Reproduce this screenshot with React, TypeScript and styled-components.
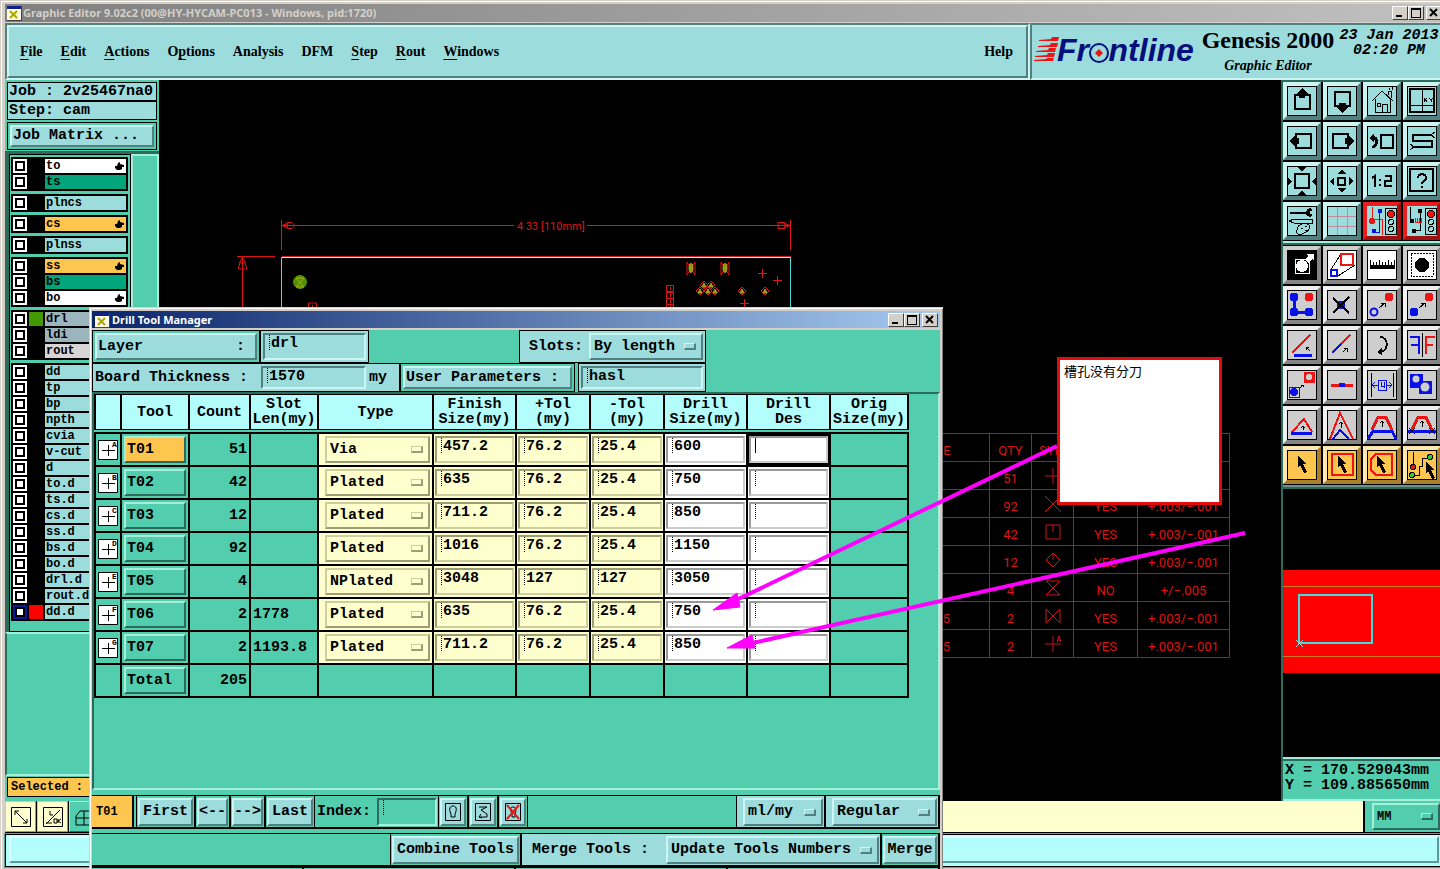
import React from 'react';
import styled, { createGlobalStyle, css } from 'styled-components';

const MONO = '"Liberation Mono", monospace';
const SERIF = '"Liberation Serif", serif';
const UI = '"Noto Sans", "Open Sans", sans-serif';

type Tone = 'aqua' | 'green' | 'cream' | 'white' | 'grey' | 'orange' | 'paper' | 'red' | 'ice' | 'win';

const tones: Record<Tone, { face: string; light: string; dark: string }> = {
  aqua: { face: '#9cdcdc', light: '#cdf5f2', dark: '#527f7f' },
  green: { face: '#52ceae', light: '#a4efdb', dark: '#2c6b5b' },
  cream: { face: '#ffffce', light: '#cecea0', dark: '#9c9c78' },
  white: { face: '#ffffff', light: '#cccccc', dark: '#999999' },
  grey: { face: '#cecece', light: '#f0f0f0', dark: '#848484' },
  orange: { face: '#ffc64f', light: '#ffe7b0', dark: '#a8802c' },
  paper: { face: '#ffffff', light: '#cecece', dark: '#848484' },
  red: { face: '#9cdcdc', light: '#ee1c1c', dark: '#a01010' },
  ice: { face: '#b4fdfd', light: '#dcffff', dark: '#5f9a9a' },
  win: { face: '#d4d0c8', light: '#ffffff', dark: '#404040' },
};

const raised = (tone: Tone, width = 2) => css`
  background: ${tones[tone].face};
  border: ${width}px solid;
  border-color: ${tones[tone].light} ${tones[tone].dark} ${tones[tone].dark} ${tones[tone].light};
`;

const sunken = (tone: Tone, width = 2) => css`
  background: ${tones[tone].face};
  border: ${width}px solid;
  border-color: ${tones[tone].dark} ${tones[tone].light} ${tones[tone].light} ${tones[tone].dark};
`;

const GlobalStyle = createGlobalStyle`
  *, *::before, *::after { box-sizing: border-box; }
  body { margin: 0; background: #000; overflow: hidden; }
  button, input, select {
    margin: 0; padding: 0; border: 0; border-radius: 0; outline: 0;
    background: none; color: #000; appearance: none;
    font: inherit; text-align: left;
  }
  svg { display: block; }
`;

/* ---------- application frame ---------- */

const Frame = styled.div`
  position: relative;
  display: flex;
  flex-direction: column;
  height: 100vh;
  overflow: hidden;
  padding: 4px 0 2px 5px;
  background: #d4d0c8;
  box-shadow: inset 1px 1px 0 #d4d0c8, inset 2px 2px 0 #fff;
  font: bold 15px/18px ${MONO};
  color: #000;
`;

const TitleBar = styled.div<{ $active?: boolean }>`
  display: flex;
  align-items: center;
  gap: ${p => (p.$active ? 2 : 1)}px;
  flex: none;
  height: ${p => (p.$active ? 18 : 19)}px;
  padding: 0 2px 0 ${p => (p.$active ? 2 : 1)}px;
  background: ${p => (p.$active ? 'linear-gradient(90deg, #0a246a, #a6caf0)' : 'linear-gradient(90deg, #808080, #c0c0c0)')};
  color: ${p => (p.$active ? '#fff' : '#d4d0c8')};
  font: bold 11px/18px ${UI};
  border-bottom: 1px solid #d4d0c8;
`;

const TitleText = styled.h1`
  flex: 1;
  margin: 0;
  font: inherit;
  white-space: nowrap;
`;

const CaptionButtons = styled.div<{ $shift?: boolean }>`
  display: flex;
  margin-right: ${p => (p.$shift ? -4 : 0)}px;
  button:last-child { margin-left: 2px; }
`;

const CaptionButton = styled.button`
  ${raised('win', 1)}
  width: 16px;
  height: 14px;
`;

const MenuRow = styled.div`
  display: flex;
  flex: none;
  height: 57px;
`;

const MenuFrame = styled.div`
  ${sunken('aqua')}
  flex: 1;
  display: flex;
`;

const MenuBar = styled.nav`
  ${raised('aqua')}
  flex: 1;
  display: flex;
  align-items: center;
  gap: 18px;
  padding: 0 13px 0 11px;
  font: bold 14px/18px ${SERIF};
`;

const MenuItem = styled.button<{ $last?: boolean }>`
  margin-left: ${p => (p.$last ? 'auto' : '0')};
  u { text-underline-offset: 3px; }
`;

const Brand = styled.header`
  ${sunken('aqua')}
  border-right: 0;
  display: flex;
  flex: none;
  width: 410px;
  padding: 1px 0 0 2px;
  gap: 2px;
`;

const BrandName = styled.div`
  display: flex;
  flex-direction: column;
  align-items: center;
  width: 136px;
  font: bold 24px/28px ${SERIF};
  white-space: nowrap;
  em { font-size: 14px; line-height: 24px; }
`;

const Clock = styled.time`
  flex: 1;
  text-align: center;
  font-style: italic;
  line-height: 15px;
  white-space: nowrap;
  padding-top: 2px;
`;

const Workspace = styled.main`
  flex: 1;
  display: flex;
  min-height: 0;
`;

/* ---------- layer list ---------- */

const Sidebar = styled.aside`
  flex: none;
  width: 154px;
  display: flex;
  flex-direction: column;
  padding: 2px;
  background: #52ceae;
`;

const InfoBox = styled.div`
  height: 19px;
  padding: 0 1px;
  border: 1px solid #000;
  background: #9cdcdc;
  white-space: nowrap;
  line-height: 17px;
`;

const MatrixBox = styled.div`
  margin-top: 2px;
  padding: 2px;
  border: 1px solid #000;
`;

const MatrixButton = styled.button`
  ${raised('aqua')}
  display: block;
  width: 100%;
  height: 22px;
  padding: 0 1px;
`;

const ListPane = styled.div`
  display: flex;
  margin: 1px -2px 0;
  border-top: 3px solid #2c6b5b;
  border-left: 4px solid #2c6b5b;
`;

const LayerGroups = styled.div`
  flex: none;
  width: 122px;
  height: 478px;
  display: flex;
  flex-direction: column;
  gap: 3px;
  padding: 2px 2px 0 1px;
  border: 1px solid #000;
`;

const ScrollTrack = styled.div`
  flex: 1;
  border: solid #a4efdb;
  border-width: 2px 2px 0 2px;
`;

const LayerGroup = styled.ul`
  list-style: none;
  margin: 0;
  padding: 2px;
  display: flex;
  flex-direction: column;
  gap: 2px;
  background: #000;
`;

const LayerRow = styled.li`
  display: grid;
  grid-template-columns: 14px 14px 1fr;
  gap: 2px;
  height: 14px;
`;

const LayerCheck = styled.input<{ $on?: boolean }>`
  width: 14px;
  height: 14px;
  border: 2px solid ${p => (p.$on ? '#0a1a9c' : '#fff')};
  background: #fff;
  box-shadow: inset 0 0 0 2px #000;
`;

const Swatch = styled.span<{ $color?: string }>`
  background: ${p => p.$color || '#000'};
`;

const LayerName = styled.label<{ $color: string }>`
  display: flex;
  align-items: center;
  justify-content: space-between;
  padding: 0 2px 0 1px;
  background: ${p => p.$color};
  font-size: 12px;
  line-height: 14px;
  white-space: nowrap;
`;

const SidePane = styled.div`
  flex: 1;
  margin: 0 -2px;
  border: solid;
  border-width: 2px 0 2px 2px;
  border-color: #a4efdb #52ceae #a4efdb #2c6b5b;
`;

const Selected = styled.div`
  height: 20px;
  margin: 1px 0 2px;
  padding: 0 3px;
  border: 1px solid #000;
  background: #ffc64f;
  font-size: 12px;
  line-height: 18px;
`;

/* ---------- drawing canvas ---------- */

const Canvas = styled.section`
  position: relative;
  flex: 1;
  min-width: 0;
  overflow: hidden;
  background: #000;
`;

const Board = styled.svg`
  position: absolute;
  inset: 0;
  width: 100%;
  height: 100%;
  font: 12px Roboto, sans-serif;
`;

const DrillChart = styled.table`
  position: absolute;
  left: 726px;
  top: 353px;
  border-collapse: collapse;
  table-layout: fixed;
  width: 344px;
  color: #dc1414;
  font: 13px/16px Roboto, sans-serif;
  th, td {
    height: 28px;
    padding: 7px 0 0;
    border: 1px solid #c41010;
    text-align: center;
    font-weight: 400;
    white-space: nowrap;
  }
  svg { margin: -7px auto 0; }
`;

/* ---------- right hand tool palette ---------- */

const Palette = styled.aside`
  flex: none;
  width: 159px;
  display: flex;
  flex-direction: column;
  overflow: hidden;
  background: #000;
  border-left: 2px solid #2c6b5b;
  border-top: 2px solid #2c6b5b;
`;

const ToolGrid = styled.div`
  display: grid;
  flex: none;
  width: 160px;
  grid-template-columns: repeat(4, 38px);
  gap: 2px;
  padding-bottom: 1px;
`;

const PaletteRule = styled.div<{ $dim?: boolean }>`
  flex: none;
  height: 4px;
  background: ${p => (p.$dim ? '#6f8f8a' : '#a4efdb')};
  border-bottom: 2px solid #2c6b5b;
  margin-bottom: ${p => (p.$dim ? 0 : 1)}px;
`;

const ToolButton = styled.button<{ $tone: Tone }>`
  ${p => raised(p.$tone, 4)}
  width: 38px;
  height: 38px;
  display: flex;
  align-items: center;
  justify-content: center;
`;

const Overview = styled.div`
  flex: 1;
  min-height: 0;
  background: #000;
  svg { width: 100%; height: 100%; }
`;

const Coordinates = styled.output`
  display: block;
  flex: none;
  height: 44px;
  padding: 4px 0 0 2px;
  background: #52ceae;
  border: solid;
  border-width: 2px 0 2px;
  border-color: #a4efdb;
  box-shadow: inset 0 2px 0 #2c6b5b;
  line-height: 15px;
  white-space: nowrap;
`;

/* ---------- bottom bars ---------- */

const BottomBar = styled.footer`
  display: flex;
  flex: none;
  height: 33px;
  border-bottom: 2px solid #000;
  background: #000;
`;

const SnapButton = styled.button<{ $on?: boolean }>`
  ${p => raised(p.$on ? 'green' : 'cream', 1)}
  width: 31px;
  height: 31px;
  margin-right: 1px;
  display: flex;
  align-items: center;
  justify-content: center;
`;

const MessageLine = styled.div`
  flex: 1;
  background: #ffffce;
`;

const UnitBox = styled.div`
  flex: none;
  width: 75px;
  margin-left: 2px;
  padding: 2px 0 2px 7px;
  background: #52ceae;
  font-size: 12px;
`;

const StatusBox = styled.div`
  flex: none;
  height: 33px;
  padding: 1px;
  background: #b4fdfd;
  border: 1px solid #000;
  border-right: 0;
  outline: 1px solid #5f9a9a;
  div {
    ${raised('ice')}
    height: 27px;
    margin: 0 0 0 2px;
  }
`;

/* ---------- drill tool manager ---------- */

const Dialog = styled.section`
  position: absolute;
  left: 89px;
  top: 307px;
  width: 854px;
  padding: 4px 3px 0;
  background: #d4d0c8;
  box-shadow: inset 1px 1px 0 #d4d0c8, inset 2px 2px 0 #fff, inset -1px 0 0 #808080;
`;

const DialogBody = styled.div`
  display: flex;
  flex-direction: column;
  margin-top: 1px;
  background: #52ceae;
`;

const Row = styled.div<{ $height: number }>`
  display: flex;
  height: ${p => p.$height}px;
`;

const Cell = styled.div<{ $width: number; $tone?: Tone; $gap?: number }>`
  flex: none;
  display: flex;
  align-items: center;
  width: ${p => p.$width}px;
  margin-left: ${p => p.$gap || 0}px;
  padding: 2px;
  border: 1px solid #000;
  background: ${p => tones[p.$tone || 'green'].face};
  white-space: nowrap;
`;

const CellLabel = styled.label<{ $indent?: number }>`
  flex: 1;
  padding-left: ${p => p.$indent || 0}px;
`;

const Unit = styled.span`
  width: 31px;
  padding-left: 3px;
`;

const PushButton = styled.button<{ $tone?: Tone; $face?: Tone; $center?: boolean }>`
  ${p => raised(p.$tone || 'aqua')}
  ${p => p.$face && css`background: ${tones[p.$face].face};`}
  flex: 1;
  display: flex;
  align-items: center;
  justify-content: ${p => (p.$center ? 'center' : 'space-between')};
  height: 100%;
  width: 100%;
  padding: 0 ${p => (p.$center ? 0 : 1)}px;
  white-space: nowrap;
`;

const FieldBox = styled.span<{ $tone: Tone; $width?: number; $focus?: boolean }>`
  ${p => sunken(p.$tone)}
  display: flex;
  flex: ${p => (p.$width ? 'none' : '1')};
  width: ${p => (p.$width ? `${p.$width}px` : 'auto')};
  min-width: 0;
  height: 100%;
  padding-left: 4px;
  &::before {
    content: '';
    flex: none;
    width: 2px;
    height: 15px;
    border-left: 1px ${p => (p.$focus ? 'solid' : 'dotted')} #000;
  }
  input {
    flex: 1;
    min-width: 0;
    height: 18px;
    line-height: 18px;
  }
`;

const OptionBox = styled.span<{ $tone: Tone; $width?: number }>`
  ${p => raised(p.$tone)}
  display: flex;
  align-items: center;
  flex: ${p => (p.$width ? 'none' : '1')};
  width: ${p => (p.$width ? `${p.$width}px` : 'auto')};
  height: 100%;
  select { flex: 1; min-width: 0; padding-left: 3px; }
  &::after {
    content: '';
    flex: none;
    width: 12px;
    height: 7px;
    margin-right: 5px;
    ${p => raised(p.$tone)}
    border-width: 1px 2px 2px 1px;
  }
`;

const TablePane = styled.div`
  height: 398px;
  border: solid;
  border-width: 2px;
  border-color: #2c6b5b #a4efdb #a4efdb #2c6b5b;
`;

const ToolTable = styled.table`
  width: 815px;
  table-layout: fixed;
  border-collapse: separate;
  border-spacing: 0;
  tbody::before { content: ''; display: table-row; height: 2px; }
`;

const Th = styled.th`
  height: 36px;
  padding: 0;
  border: solid #000;
  border-width: 1px 2px 1px 0;
  &:first-child { border-left-width: 2px; }
  background: #b4fdfd;
  line-height: 15px;
  white-space: nowrap;
`;

const Td = styled.td<{ $tone?: Tone; $right?: boolean; $top?: boolean; $focus?: boolean }>`
  height: ${p => (p.$top ? 35 : 33)}px;
  padding: ${p => (p.$tone ? '2px 1px' : '2px')};
  border: solid #000;
  border-width: ${p => (p.$top ? 2 : 0)}px 2px 2px 0;
  &:first-child { border-left-width: 2px; }
  background: ${p => (p.$focus ? '#000' : tones[p.$tone || 'green'].face)};
  text-align: ${p => (p.$right ? 'right' : 'left')};
  white-space: nowrap;
`;

const CellBox = styled.div<{ $inset?: boolean }>`
  display: flex;
  height: 27px;
  padding: ${p => (p.$inset ? '0 1px 0 5px' : '0')};
`;

const FooterBar = styled.div<{ $gap: number }>`
  display: flex;
  height: 34px;
  margin-top: ${p => p.$gap}px;
  border: solid #000;
  border-width: 1px 1px 2px 0;
`;

const FooterCell = styled.div<{ $width: number; $tone?: Tone; $plain?: boolean; $lead?: number }>`
  flex: none;
  display: flex;
  align-items: center;
  width: ${p => p.$width}px;
  padding: 2px 1px 1px ${p => p.$lead || 1}px;
  border: solid #000;
  border-width: ${p => (p.$plain ? '0' : '0 1px')};
  background: ${p => tones[p.$tone || 'green'].face};
  white-space: nowrap;
`;

const ToolTag = styled.div`
  width: 42px;
  margin-right: 2px;
  padding-left: 4px;
  border-right: 2px solid #000;
  background: #ffc64f;
  font-size: 12px;
  line-height: 32px;
`;

const Spacer = styled.div`
  flex: 1;
`;

const StubRow = styled.div`
  display: grid;
  grid-template-columns: repeat(4, 1fr);
  height: 30px;
  border-top: 1px solid #000;
  div { border-right: 2px solid #000; }
`;

/* ---------- annotations ---------- */

const Note = styled.div`
  position: absolute;
  left: 898px;
  top: 277px;
  width: 165px;
  height: 148px;
  padding: 1px 4px;
  border: 3px solid #e30c0c;
  background: #fff;
  font: 13px/20px "Noto Sans CJK SC", sans-serif;
`;

const Arrows = styled.svg`
  position: absolute;
  inset: 0;
  width: 100%;
  height: 100%;
  pointer-events: none;
`;

/* ---------- icons ---------- */

const R = '#ee1414';
const B = '#0a10e8';
const S = (p: React.SVGProps<SVGGElement>) => <g fill="none" stroke="#000" {...p} />;
const Cursor = ({ x = 0, y = 0 }) => (
  <path transform={`translate(${x} ${y})`} d="M10 7v11l2-2 4 8 3-1-4-8h4z" fill="#000" />
);
const Light = () => (
  <g stroke="#000">
    <rect x="18" y="2" width="11" height="26" fill="#9cdcdc" />
    <circle cx="24" cy="8" r="3.5" fill={R} />
    <circle cx="24" cy="16" r="2.5" fill="none" />
    <circle cx="24" cy="23" r="2.5" fill="none" />
  </g>
);

type Tool = { name: string; tone: Tone; art: React.ReactNode };

const topTools: Tool[] = [
  { name: 'Pan up', tone: 'aqua', art: <><S strokeWidth="2"><rect x="8" y="9" width="15" height="14" /></S><path d="M15 2l6 6h-3v4h-6V8H9z" /></> },
  { name: 'Pan down', tone: 'aqua', art: <><S strokeWidth="2"><rect x="8" y="6" width="15" height="14" /></S><path d="M15 27l6-6h-2v-4h-7v4H9z" /></> },
  { name: 'Home view', tone: 'aqua', art: <S><path d="M5 15L15 5l11 10M8 13v13h15V13M15 26v-8h5v8M10 17h3v3h-3zM21 9V5h3v7M22 2v2M25 1v3" /></S> },
  { name: 'Zoom to XY', tone: 'aqua', art: <S><rect x="3" y="3" width="24" height="23" strokeWidth="2" /><path d="M15 3v23M3 19h24M17 12l3 4M20 12l-3 4M22 12l2 2v2M26 12l-2 2" /></S> },
  { name: 'Pan left', tone: 'aqua', art: <><S strokeWidth="2"><rect x="9" y="8" width="15" height="14" /></S><path d="M2 15l6-5v2h4v6H8v2z" /></> },
  { name: 'Pan right', tone: 'aqua', art: <><S strokeWidth="2"><rect x="6" y="8" width="15" height="14" /></S><path d="M28 15l-6-5v2h-4v6h4v2z" /></> },
  { name: 'Previous view', tone: 'aqua', art: <><S strokeWidth="2"><rect x="14" y="9" width="12" height="13" /></S><path d="M2 12l5-4v2c5 0 6 9 0 12H5v-2c4-2 4-6 2-6v2z" /></> },
  { name: 'Snake view', tone: 'aqua', art: <><S strokeWidth="2"><path d="M24 9H6v6h19v6H7" /></S><S><path d="M24 9l4-3M24 9l4 3M7 21l-4-3M7 21l-4 3" /></S></> },
  { name: 'Zoom out', tone: 'aqua', art: <><S strokeWidth="2"><rect x="8" y="8" width="14" height="14" /></S><path d="M15 5l-5-4h10zM15 25l-5 4h10zM5 15l-5-4v9zM25 15l4-4v9z" /></> },
  { name: 'Zoom in', tone: 'aqua', art: <><S strokeWidth="2"><rect x="11" y="12" width="7" height="7" /></S><path d="M15 4l5 4H10zM15 26l5-4H10zM3 15l4-4v9zM26 15l-4-4v9z" /></> },
  { name: 'Zoom one to two', tone: 'aqua', art: <S strokeWidth="2"><path d="M5 12l3-2v11M13 13v2M13 18v2M18 10h6v5h-6v5h7" /></S> },
  { name: 'Query', tone: 'aqua', art: <S strokeWidth="2"><rect x="3" y="3" width="23" height="22" /><path d="M11 12c0-5 8-5 8 0 0 3-4 3-4 6M15 20v2" /></S> },
  { name: 'Options', tone: 'aqua', art: <><path d="M3 6h16c0-4 5-5 7-2l-3 1v3l3 1c-2 3-7 2-7-1H3z" /><S><path d="M2 15l5-2h18v4H7zM10 24c-2 4 3 6 7 3 6-2 8-8 3-9-5-2-10 2-10 6zM14 22h2M18 20h2M18 24h2" /></S></> },
  { name: 'Grid', tone: 'aqua', art: <S stroke="#c08c9c"><path d="M10 1v28M20 1v28M1 10h28M1 20h28" /></S> },
  { name: 'Net display', tone: 'red', art: <><S stroke={R}><path d="M5 1v12h10v16" /></S><S stroke={B}><path d="M12 4v22H7" /></S><circle cx="5" cy="15" r="3" fill={R} /><circle cx="13" cy="5" r="2.5" fill={B} /><circle cx="7" cy="25" r="2.5" fill={B} /><Light /></> },
  { name: 'Net highlight', tone: 'red', art: <><S><path d="M3 1v14l3 2M13 5v19H6" /></S><S stroke={R} strokeWidth="1"><path d="M8 16h7M8 12v4M10 12v4M12 12v4M14 12v4" /></S><circle cx="5" cy="15" r="2.5" /><circle cx="13" cy="5" r="2.5" /><circle cx="7" cy="25" r="2.5" /><Light /></> },
];

const editTools: Tool[] = [
  { name: 'Feature', tone: 'paper', art: <><rect x="1" y="1" width="28" height="28" /><rect x="8" y="9" width="14" height="14" fill="none" stroke="#fff" /><circle cx="15" cy="16" r="6" fill="#fff" /><path d="M18 10l3-4-2-2h8v7l-2-2-4 4z" fill="#fff" /></> },
  { name: 'Rescale', tone: 'paper', art: <><S><path d="M3 21L14 4M11 26l17-11" /></S><S stroke={R} strokeWidth="2"><rect x="14" y="4" width="12" height="11" /></S><S stroke={B} strokeWidth="2"><rect x="4" y="20" width="6" height="6" /></S></> },
  { name: 'Measure', tone: 'paper', art: <path d="M3 10h1v5h2v-3h1v3h2v-3h1v3h2v-5h1v5h2v-3h1v3h2v-3h1v3h2v-5h1v5h2v-3h1v3h2v-5h1v9H3z" /> },
  { name: 'Select area', tone: 'paper', art: <><circle cx="15" cy="15" r="7" /><S strokeDasharray="2 1"><rect x="4" y="3" width="22" height="23" /></S></> },
  { name: 'Chain', tone: 'grey', art: <><S stroke={B} strokeWidth="3"><path d="M7 7v15h15" /></S><circle cx="7" cy="7" r="4.5" fill={B} /><circle cx="7" cy="22" r="4.5" fill={B} /><circle cx="22" cy="22" r="4.5" fill={B} /><circle cx="22" cy="7" r="4.5" fill={R} /></> },
  { name: 'Delete', tone: 'grey', art: <><circle cx="14" cy="15" r="4.5" fill={B} /><S strokeWidth="2"><path d="M6 8l16 15M22 7L6 23" /></S></> },
  { name: 'Copy', tone: 'grey', art: <><circle cx="22" cy="7" r="4.5" fill={R} /><circle cx="7" cy="22" r="3.5" fill="none" stroke={B} strokeWidth="2" shapeRendering="auto" /><S><path d="M12 18l6-5M14 13h4v4" /></S></> },
  { name: 'Move', tone: 'grey', art: <><circle cx="22" cy="7" r="4.5" fill={R} /><circle cx="7" cy="22" r="4.5" fill={B} /><S><path d="M12 18l6-5M14 13h4v4" /></S></> },
  { name: 'Angle', tone: 'grey', art: <><S stroke={R} strokeWidth="2"><path d="M5 23L23 5" /></S><S stroke={B} strokeWidth="3"><path d="M7 25h18" /></S><S><path d="M23 21l-4-4M19 20v-3h3" /></S></> },
  { name: 'Extend', tone: 'grey', art: <><S stroke={B} strokeWidth="2"><path d="M5 23l9-9" /></S><S stroke={R} strokeWidth="2"><path d="M14 14l9-9" /></S><S><path d="M16 22l4-4M17 18h3v4" /></S></> },
  { name: 'Rotate', tone: 'grey', art: <><S><path d="M13 7c9 0 9 14 0 15" strokeWidth="2" /></S><path d="M10 22l5-4v7z" /></> },
  { name: 'Mirror', tone: 'grey', art: <><S><path d="M15 3v24" /></S><S stroke={B} strokeWidth="2"><path d="M3 7h9v17M4 15h8" /></S><S stroke={R} strokeWidth="2"><path d="M28 7h-9v17M26 15h-7" /></S></> },
  { name: 'Copy pad', tone: 'grey', art: <><rect x="17" y="2" width="11" height="11" fill={R} /><circle cx="22" cy="7" r="3" fill="#cecece" /><S stroke={B}><rect x="2" y="17" width="10" height="10" /></S><circle cx="7" cy="22" r="4" fill={B} /><S><path d="M13 18l3-3M14 15h2v2" /></S></> },
  { name: 'Break', tone: 'grey', art: <><path d="M4 15h22" stroke={R} strokeWidth="3" /><path d="M12 15h6" stroke={B} strokeWidth="4" /></> },
  { name: 'Spacing', tone: 'grey', art: <><S><path d="M4 3v24M26 3v24" /></S><S stroke={B}><path d="M5 15h6M8 12l-3 3 3 3M25 15h-6M22 12l3 3-3 3M11 10h8v10h-8zM14 12v4h3M17 12v6" /></S></> },
  { name: 'Merge', tone: 'grey', art: <><path d="M3 4h13v7h9v13H12v-6H3z" fill={B} /><circle cx="9" cy="9" r="3.5" fill="#cecece" shapeRendering="auto" /><circle cx="18" cy="17" r="4.5" fill="#cecece" shapeRendering="auto" /></> },
  { name: 'Slide segment', tone: 'grey', art: <><S stroke={R} strokeWidth="2"><path d="M5 22L17 9l8 13" /></S><path d="M4 23h21" stroke={B} strokeWidth="3" /><S><path d="M16 20v-4M14 18l2-2 2 2" /></S></> },
  { name: 'Slide corner', tone: 'grey', art: <><S stroke={R} strokeWidth="2"><path d="M3 29L13 3l13 26" /></S><S stroke={B} strokeWidth="2"><path d="M6 29l7-9 9 9" /></S><S><path d="M14 18v-6M12 14l2-2 2 2" /></S></> },
  { name: 'Slide shape', tone: 'grey', art: <><S stroke={R} strokeWidth="3"><path d="M5 20l6-13h8l6 13" /></S><S stroke={B} strokeWidth="3"><path d="M1 29l5-8h19l4 8" /></S><S><path d="M15 17v-6M13 13l2-2 2 2" /></S></> },
  { name: 'Slide free', tone: 'grey', art: <><S stroke={R} strokeWidth="3"><path d="M5 20l6-13h8l6 13" /></S><path d="M1 21h28" stroke={B} strokeWidth="3" /><S><path d="M15 17v-6M13 13l2-2 2 2M2 18l6 6M8 18l-6 6M22 18l6 6M28 18l-6 6" /></S></> },
  { name: 'Select', tone: 'orange', art: <Cursor x={1} y={-1} /> },
  { name: 'Select in box', tone: 'orange', art: <><S stroke={R} strokeWidth="2"><rect x="5" y="4" width="21" height="21" /></S><Cursor x={1} y={-1} /></> },
  { name: 'Select in polygon', tone: 'orange', art: <><S stroke={R} strokeWidth="2"><path d="M9 4h16v21H9l-5-5V9z" /></S><Cursor x={0} y={-1} /></> },
  { name: 'Select net', tone: 'orange', art: <><S><path d="M6 2v15M6 25h6v-9h3V8h7" /></S><circle cx="6" cy="17" r="2.5" fill={R} stroke="#000" /><circle cx="5" cy="25" r="2.5" fill="#3c3" stroke="#000" /><circle cx="23" cy="7" r="2.5" fill="#3c3" stroke="#000" /><Cursor x={9} y={5} /></> },
];

const ToolIcon = ({ tool }: { tool: Tool }) => (
  <ToolButton $tone={tool.tone} aria-label={tool.name}>
    <svg width="30" height="30" viewBox="0 0 30 30" shapeRendering="crispEdges">
      {tool.tone === 'red' ? null : <rect x="0.5" y="0.5" width="29" height="29" fill="none" stroke="#000" />}
      {tool.art}
    </svg>
  </ToolButton>
);

const WindowIcon = () => (
  <svg width="16" height="16" viewBox="0 0 16 16" shapeRendering="crispEdges" aria-hidden="true">
    <rect x="1" y="1" width="14" height="14" fill="#fffbe6" />
    <rect x="1" y="1" width="14" height="3" fill="#10208a" />
    <path d="M4 6l7 7M11 6l-7 7" stroke="#a8a800" strokeWidth="2" shapeRendering="auto" />
    <path d="M15 1v14H1" fill="none" stroke="#444" />
  </svg>
);

const WindowControls = ({ shift }: { shift?: boolean }) => (
  <CaptionButtons $shift={shift}>
    <CaptionButton aria-label="Minimize"><svg width="14" height="12"><path d="M3 9h6" stroke="#000" strokeWidth="2" /></svg></CaptionButton>
    <CaptionButton aria-label="Maximize"><svg width="14" height="12" shapeRendering="crispEdges"><path d="M2.5 2h9v8h-9z" fill="none" stroke="#000" /><path d="M2 2h10" stroke="#000" strokeWidth="2" /></svg></CaptionButton>
    <CaptionButton aria-label="Close"><svg width="14" height="12"><path d="M3 2l7 7M10 2l-7 7" stroke="#000" strokeWidth="2" /></svg></CaptionButton>
  </CaptionButtons>
);

const Logo = () => (
  <svg width="164" height="48" viewBox="0 0 164 48" role="img" aria-label="Frontline">
    <g fill={R}>
      <path d="M5 14l12-1 1-2h7l-1 4H5z" />
      <path d="M4 20l12-1 1-2h7l-1 4H4z" />
      <path d="M2 25l12-1 1-2h7l-1 4H2z" />
      <path d="M1 30l12-1 1-2h7l-1 4H1z" />
      <path d="M0 34l12-1 1-1h7l-1 3H0z" />
    </g>
    <text x="23" y="35" fontFamily="Liberation Sans, sans-serif" fontSize="32" fontWeight="700" fontStyle="italic" fill="#06107c">
      Fr<tspan fill="none">o</tspan>ntline
    </text>
    <circle cx="65" cy="27" r="9" fill="none" stroke="#06107c" strokeWidth="2" />
    <path d="M65 23l4 4-4 4-4-4z" fill={R} />
  </svg>
);

const Hand = () => (
  <svg width="9" height="9" viewBox="0 0 9 9" aria-hidden="true">
    <path d="M3 1l2-1v2l4 1v2H7v2L5 8H2L0 6V4h2z" />
  </svg>
);

/* ---------- data ---------- */

type Layer = { name: string; color: string; hand?: boolean; swatch?: string; on?: boolean };
const aqua = '#9cdcdc';
const layerGroups: Layer[][] = [
  [{ name: 'to', color: '#fff', hand: true }, { name: 'ts', color: '#00a57b' }],
  [{ name: 'plncs', color: aqua }],
  [{ name: 'cs', color: '#ffc64f', hand: true }],
  [{ name: 'plnss', color: aqua }],
  [{ name: 'ss', color: '#ffc64f', hand: true }, { name: 'bs', color: '#00a57b' }, { name: 'bo', color: '#fff', hand: true }],
  [{ name: 'drl', color: '#9cb5bd', swatch: '#429a00' }, { name: 'ldi', color: '#9cb5bd' }, { name: 'rout', color: '#d6d6d6' }],
  [
    ...['dd', 'tp', 'bp', 'npth', 'cvia', 'v-cut', 'd', 'to.d', 'ts.d', 'cs.d', 'ss.d', 'bs.d', 'bo.d', 'drl.d', 'rout.d'].map(name => ({ name, color: aqua })),
    { name: 'dd.d', color: aqua, swatch: '#ff0000', on: true },
  ],
];

const menus: [string, string, string][] = [
  ['', 'F', 'ile'], ['', 'E', 'dit'], ['', 'A', 'ctions'], ['O', 'p', 'tions'], ['Analysis', '', ''],
  ['DFM', '', ''], ['', 'S', 'tep'], ['', 'R', 'out'], ['', 'W', 'indows'],
];

const columns: [string, number][] = [
  ['', 28], ['Tool', 68], ['Count', 61], ['Slot|Len(my)', 68], ['Type', 115], ['Finish|Size(my)', 83],
  ['+Tol|(my)', 74], ['-Tol|(my)', 74], ['Drill|Size(my)', 83], ['Drill|Des', 83], ['Orig|Size(my)', 78],
];

const tools = [
  { mark: 'A', id: 'T01', count: 51, slot: '', type: 'Via', finish: '457.2', plus: '76.2', minus: '25.4', drill: '600' },
  { mark: 'B', id: 'T02', count: 42, slot: '', type: 'Plated', finish: '635', plus: '76.2', minus: '25.4', drill: '750' },
  { mark: 'C', id: 'T03', count: 12, slot: '', type: 'Plated', finish: '711.2', plus: '76.2', minus: '25.4', drill: '850' },
  { mark: 'D', id: 'T04', count: 92, slot: '', type: 'Plated', finish: '1016', plus: '76.2', minus: '25.4', drill: '1150' },
  { mark: 'E', id: 'T05', count: 4, slot: '', type: 'NPlated', finish: '3048', plus: '127', minus: '127', drill: '3050' },
  { mark: 'F', id: 'T06', count: 2, slot: '1778', type: 'Plated', finish: '635', plus: '76.2', minus: '25.4', drill: '750' },
  { mark: 'G', id: 'T07', count: 2, slot: '1193.8', type: 'Plated', finish: '711.2', plus: '76.2', minus: '25.4', drill: '850' },
];

const chart: { size: string; qty: string; sym: string; plated: string; tol: string }[] = [
  { size: '', qty: '51', sym: 'M0 8h16M8 0v16', plated: 'YES', tol: '+.003/−.001' },
  { size: '', qty: '92', sym: 'M0 0l16 16M16 0L0 16', plated: 'YES', tol: '+.003/−.001' },
  { size: '', qty: '42', sym: 'M1 1h14v14H1zM8 1v7', plated: 'YES', tol: '+.003/−.001' },
  { size: '', qty: '12', sym: 'M8 1l7 7-7 7-7-7zM8 1v7', plated: 'YES', tol: '+.003/−.001' },
  { size: '', qty: '4', sym: 'M1 1h14L1 15h14z', plated: 'NO', tol: '+/−.005' },
  { size: '.025', qty: '2', sym: 'M1 1v14L15 1v14z', plated: 'YES', tol: '+.003/−.001' },
  { size: '.025', qty: '2', sym: 'M0 8h16M8 0v16M12 6l2-6 2 6M13 4h2', plated: 'YES', tol: '+.003/−.001' },
];

/* ---------- parts ---------- */

const Field = ({ id, label, value, tone, width, focus }: { id?: string; label: string; value: string; tone: Tone; width?: number; focus?: boolean }) => (
  <FieldBox $tone={tone} $width={width} $focus={focus}>
    <input id={id} aria-label={label} defaultValue={value} />
  </FieldBox>
);

const OptionMenu = ({ id, label, value, tone, width }: { id?: string; label: string; value: string; tone: Tone; width?: number }) => (
  <OptionBox $tone={tone} $width={width}>
    <select id={id} aria-label={label} defaultValue={value}>
      <option>{value}</option>
    </select>
  </OptionBox>
);

const Diamond = ({ x, y }: { x: number; y: number }) => (
  <g>
    <path d={`M${x} ${y - 4}l4 4-4 4-4-4z`} fill="none" stroke="#e01414" />
    <path d={`M${x} ${y - 2}l2 4h-4z`} fill="#a8a010" stroke="#a8a010" />
  </g>
);

const BoardDrawing = () => (
  <Board aria-label="Board drawing">
    <g transform="translate(-159 -80)" fill="none" stroke="#e01414">
      <path d="M281.5 220v30M790.5 220v30M282 225.5h232M587 225.5h203M242.5 257v60M237 256.5h38" />
      <path d="M282 225.5l5-2v4zM287 222.5h5l2 2v2l-2 2h-5zM790 225.5l-5-2v4zM785 222.500h-7v6h7zM242.500 257l-3 6h6zM240 263l-2 6h9l-2-6" />
      <path d="M282 256.500h509" />
      <path d="M282 257.500h509" stroke="#fff" />
      <path d="M281.500 257v60M790.500 257v60" stroke="#4fd6d6" />
      <circle cx="300" cy="282" r="6.500" fill="#4f9400" stroke="#4f9400" />
      <path d="M296 278h8l-8 9h8z" stroke="#b0a818" />
      <path d="M308.500 310v-7h8v7M312.500 305v4" />
      {[691, 725].map(x => (
        <g key={x}>
          <path d={`M${x - 4} 262v13M${x + 4} 262v13M${x - 4} 262l8 13M${x + 4} 262l-8 13`} />
          <ellipse cx={x} cy="268" rx="2" ry="4.500" fill="#8a9a10" stroke="#c0a818" />
        </g>
      ))}
      {[285, 292, 298, 304].map(y => <path key={y} d={`M666.500 ${y}.500h7v6h-7zM670.500 ${y + 2}v3`} />)}
      {[[704, 285], [711, 285], [700, 291], [708, 291], [715, 291], [742, 291], [765, 291]].map(([x, y]) => <Diamond key={`${x}-${y}`} x={x} y={y} />)}
      <path d="M758 273.500h9M762.500 269v9M773 280.500h9M777.500 276v9M740 303.500h9M744.500 299v9" />
      <text x="517" y="230" fill="#e01414" stroke="none" fontSize="11">4 33 [110mm]</text>
    </g>
  </Board>
);

const ChartTable = () => (
  <DrillChart>
    <colgroup>
      <col width="104" /><col width="42" /><col width="42" /><col width="64" /><col width="92" />
    </colgroup>
    <thead><tr><th>SIZE</th><th>QTY</th><th>SYM</th><th>PLTD</th><th>TOL</th></tr></thead>
    <tbody>
      {chart.map((r, i) => (
        <tr key={i}>
          <td>{r.size}</td><td>{r.qty}</td>
          <td><svg width="16" height="16"><path d={r.sym} fill="none" stroke="#d01212" /></svg></td>
          <td>{r.plated}</td><td>{r.tol}</td>
        </tr>
      ))}
    </tbody>
  </DrillChart>
);

const LayerList = () => (
  <Sidebar>
    <InfoBox>Job : 2v25467na0</InfoBox>
    <InfoBox>Step: cam</InfoBox>
    <MatrixBox><MatrixButton>Job Matrix ...</MatrixButton></MatrixBox>
    <ListPane>
      <LayerGroups>
        {layerGroups.map((group, i) => (
          <LayerGroup key={i}>
            {group.map(layer => (
              <LayerRow key={layer.name}>
                <LayerCheck type="checkbox" id={`layer-${layer.name}`} $on={layer.on} />
                <Swatch $color={layer.swatch} />
                <LayerName htmlFor={`layer-${layer.name}`} $color={layer.color}>{layer.name}{layer.hand && <Hand />}</LayerName>
              </LayerRow>
            ))}
          </LayerGroup>
        ))}
      </LayerGroups>
      <ScrollTrack />
    </ListPane>
    <SidePane />
    <Selected>Selected :</Selected>
  </Sidebar>
);

const DrillToolManager = () => (
  <Dialog aria-label="Drill Tool Manager">
    <TitleBar $active><WindowIcon /><TitleText as="h2">Drill Tool Manager</TitleText><WindowControls /></TitleBar>
    <DialogBody>
      <Row $height={33}>
        <Cell $width={168}><PushButton><span>Layer</span><span>:&nbsp;</span></PushButton></Cell>
        <Cell $width={109} $tone="aqua"><Field label="Layer" value="drl" tone="aqua" /></Cell>
        <Cell $width={187} $gap={150} $tone="aqua">
          <CellLabel htmlFor="slots" $indent={7}>Slots:</CellLabel>
          <OptionMenu id="slots" label="Slots" value="By length" tone="aqua" width={114} />
        </Cell>
      </Row>
      <Row $height={29}>
        <Cell $width={308} $tone="aqua">
          <CellLabel htmlFor="thickness">Board Thickness :</CellLabel>
          <Field id="thickness" label="Board Thickness" value="1570" tone="aqua" width={105} />
          <Unit>my</Unit>
        </Cell>
        <Cell $width={175}><PushButton>User Parameters :</PushButton></Cell>
        <Cell $width={128} $gap={3} $tone="aqua"><Field label="User Parameters" value="hasl" tone="aqua" /></Cell>
      </Row>
      <TablePane>
        <ToolTable>
          <colgroup>{columns.map(([name, width]) => <col key={name} width={width} />)}</colgroup>
          <thead>
            <tr>
              {columns.map(([name]) => (
                <Th key={name}>{name.split('|').map((line, i) => <React.Fragment key={line}>{i > 0 && <br />}{line}</React.Fragment>)}</Th>
              ))}
            </tr>
          </thead>
          <tbody>
            {tools.map((t, i) => (
              <tr key={t.id}>
                <Td $top={i === 0}>
                  <svg width="20" height="20" viewBox="0 0 20 20">
                    <path d="M.5.5h19v19H.5z" fill="#fff" stroke="#000" />
                    <path d="M4 10.500h13M10.500 5v11" stroke="#000" />
                    <text x="14" y="7" fontSize="8" fontFamily="Liberation Mono">{t.mark}</text>
                  </svg>
                </Td>
                <Td $top={i === 0}><CellBox><PushButton $tone="green" $face={i === 0 ? 'orange' : undefined}>{t.id}</PushButton></CellBox></Td>
                <Td $top={i === 0} $right>{t.count}</Td>
                <Td $top={i === 0}>{t.slot}</Td>
                <Td $top={i === 0} $tone="cream"><CellBox $inset><OptionMenu label={`${t.id} type`} value={t.type} tone="cream" /></CellBox></Td>
                <Td $top={i === 0} $tone="cream"><CellBox><Field label={`${t.id} finish size`} value={t.finish} tone="cream" /></CellBox></Td>
                <Td $top={i === 0} $tone="cream"><CellBox><Field label={`${t.id} plus tolerance`} value={t.plus} tone="cream" /></CellBox></Td>
                <Td $top={i === 0} $tone="cream"><CellBox><Field label={`${t.id} minus tolerance`} value={t.minus} tone="cream" /></CellBox></Td>
                <Td $top={i === 0} $tone="white"><CellBox><Field label={`${t.id} drill size`} value={t.drill} tone="white" /></CellBox></Td>
                <Td $top={i === 0} $tone="white" $focus={i === 0}><CellBox><Field label={`${t.id} drill designator`} value="" tone="white" focus={i === 0} /></CellBox></Td>
                <Td $top={i === 0} />
              </tr>
            ))}
            <tr>
              <Td /><Td><CellBox><PushButton $tone="green">Total</PushButton></CellBox></Td><Td $right>205</Td>
              {[0, 1, 2, 3, 4, 5, 6, 7].map(n => <Td key={n} />)}
            </tr>
          </tbody>
        </ToolTable>
      </TablePane>
      <FooterBar $gap={5}>
        <ToolTag>T01</ToolTag>
        <FooterCell $width={59}><PushButton $center>First</PushButton></FooterCell>
        <FooterCell $width={35}><PushButton $center>&lt;--</PushButton></FooterCell>
        <FooterCell $width={35}><PushButton $center>--&gt;</PushButton></FooterCell>
        <FooterCell $width={50}><PushButton $center>Last</PushButton></FooterCell>
        <FooterCell $width={123} $plain $lead={2}>
          <CellLabel htmlFor="index">Index:</CellLabel>
          <Field id="index" label="Index" value="" tone="green" width={60} />
        </FooterCell>
        <FooterCell $width={30}>
          <PushButton $center aria-label="Show"><svg width="16" height="18" viewBox="0 0 16 18"><S><path d="M.5.5h15v17H.5zM8 3c-5 0-3 6-2 8v3h4v-3c1-2 3-8-2-8z" /></S></svg></PushButton>
        </FooterCell>
        <FooterCell $width={30}>
          <PushButton $center aria-label="Route"><svg width="16" height="18" viewBox="0 0 16 18"><S><path d="M.5.5h15v17H.5zM4 4h8L6 7l6 4v3H4l2-3M4 14l3 1" /></S></svg></PushButton>
        </FooterCell>
        <FooterCell $width={30}>
          <PushButton $center aria-label="Clear"><svg width="16" height="18" viewBox="0 0 16 18"><S><path d="M.5.5h15v17H.5zM8 4c-4 0-2 5-1 7v3h3v-3c1-2 2-7-2-7z" /></S><path d="M2 2l12 14M14 2L2 16" stroke={R} strokeWidth="2" /></svg></PushButton>
        </FooterCell>
        <Spacer />
        <FooterCell $width={89} $tone="aqua" $lead={6}><OptionMenu label="Units" value="ml/my" tone="aqua" /></FooterCell>
        <FooterCell $width={114} $tone="aqua" $lead={6}><OptionMenu label="Mode" value="Regular" tone="aqua" /></FooterCell>
      </FooterBar>
      <FooterBar $gap={4}>
        <Spacer />
        <FooterCell $width={131}><PushButton $center>Combine Tools</PushButton></FooterCell>
        <FooterCell $width={360} $tone="aqua">
          <CellLabel htmlFor="merge" $indent={9}>Merge Tools :</CellLabel>
          <OptionMenu id="merge" label="Merge Tools" value="Update Tools Numbers" tone="aqua" width={213} />
        </FooterCell>
        <FooterCell $width={58}><PushButton $center>Merge</PushButton></FooterCell>
      </FooterBar>
      <StubRow><div /><div /><div /><div /></StubRow>
    </DialogBody>
  </Dialog>
);

export default function App() {
  return (
    <Frame>
      <GlobalStyle />
      <TitleBar>
        <WindowIcon />
        <TitleText>Graphic Editor 9.02c2 (00@HY-HYCAM-PC013 - Windows, pid:1720)</TitleText>
        <WindowControls shift />
      </TitleBar>
      <MenuRow>
        <MenuFrame>
          <MenuBar>
            {menus.map(([a, key, b]) => <MenuItem key={a + key + b}>{a}{key && <u>{key}</u>}{b}</MenuItem>)}
            <MenuItem $last>Help</MenuItem>
          </MenuBar>
        </MenuFrame>
        <Brand>
          <Logo />
          <BrandName>Genesis 2000<em>Graphic Editor</em></BrandName>
          <Clock>23 Jan 2013<br />02:20 PM</Clock>
        </Brand>
      </MenuRow>
      <Workspace>
        <LayerList />
        <Canvas>
          <BoardDrawing />
          <ChartTable />
          <Note>槽孔没有分刀</Note>
        </Canvas>
        <Palette>
          <ToolGrid>{topTools.map(t => <ToolIcon key={t.name} tool={t} />)}</ToolGrid>
          <PaletteRule />
          <ToolGrid>{editTools.map(t => <ToolIcon key={t.name} tool={t} />)}</ToolGrid>
          <PaletteRule $dim />
          <Overview>
            <svg aria-label="Overview">
              <g transform="translate(-1283 -489)" fill="none">
                <path d="M1283 570h160v103h-160z" fill="#ff0000" />
                <path d="M1283 586.500h160M1283 656.500h160" stroke="#d07818" />
                <rect x="1299" y="595" width="73" height="48" stroke="#40dede" strokeWidth="2" />
                <path d="M1296 640l7 7M1303 640l-7 7" stroke="#a8d0c8" />
              </g>
            </svg>
          </Overview>
          <Coordinates>X = 170.529043mm<br />Y = 109.885650mm</Coordinates>
        </Palette>
      </Workspace>
      <BottomBar>
        <SnapButton aria-label="Snap diagonal"><svg width="20" height="20" viewBox="0 0 20 20"><S><path d="M.5.5h19v19H.5zM4 4l12 12M4 8V4h4M12 16h4v-4" /></S></svg></SnapButton>
        <SnapButton aria-label="Snap angle"><svg width="20" height="20" viewBox="0 0 20 20"><S><path d="M.5.5h19v19H.5zM3 17L17 3M3 16h6M7 4v4h3M11 12h3v4h-3zM15 12v4M18 12l-3 2 3 2" /></S></svg></SnapButton>
        <SnapButton $on aria-label="Snap grid"><svg width="20" height="20" viewBox="0 0 20 20"><S><path d="M5 4h14v14H1V9zM1 11h18M9 4v14" /></S></svg></SnapButton>
        <MessageLine />
        <UnitBox><OptionMenu label="Units of measure" value="MM" tone="green" /></UnitBox>
      </BottomBar>
      <StatusBox><div /></StatusBox>
      <DrillToolManager />
      <Arrows aria-hidden="true">
        <g stroke="#ff00ff" strokeWidth="4" fill="#ff00ff">
          <path d="M1057 446L730 603M1245 533L748 644" />
          <path d="M713 610l24-17 3 14zM727 648l25-13 3 13z" strokeWidth="1" />
        </g>
      </Arrows>
    </Frame>
  );
}
